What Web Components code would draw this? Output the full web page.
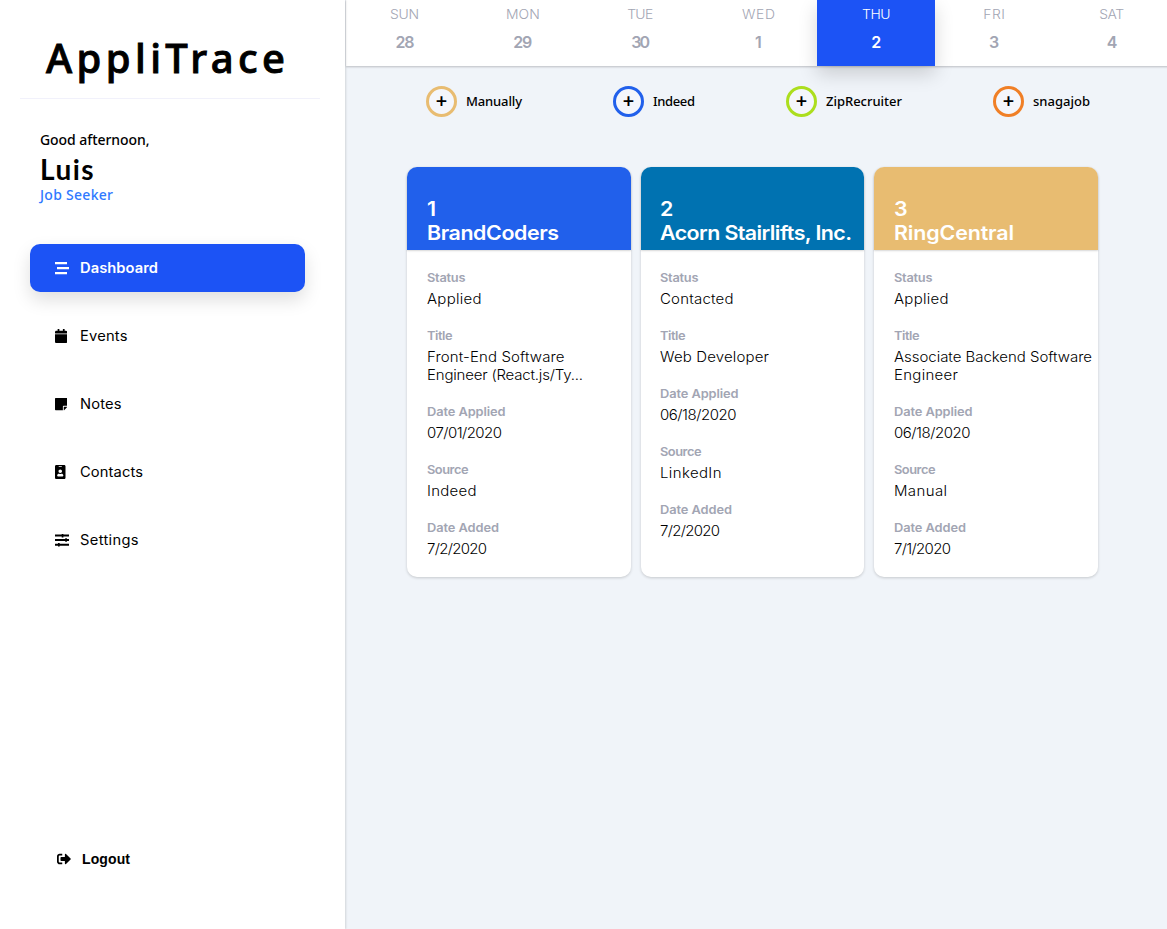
<!DOCTYPE html>
<html lang="en">
<head>
<meta charset="utf-8">
<title>AppliTrace</title>
<style>
html, body { margin: 0; height: 100%; background: #f0f4f9; overflow: hidden; }
body { font-family: Inter, "Liberation Sans", sans-serif; color: #000; --sx: 1.07; }
</style>
</head>
<body>
<tracker-app></tracker-app>
<script>
const define = (name, html, setup) => customElements.define(name, class extends HTMLElement {
  connectedCallback() {
    if (this.shadowRoot) return;
    const root = this.attachShadow({ mode: 'open' });
    root.innerHTML = typeof html === 'function' ? html(this) : html;
    if (setup) setup(this, root);
  }
});

/* One line of text, widened by --sx and tracked to the advance width given in "w". */
define('fit-text', el => `<style>
  :host { display: block; white-space: nowrap; }
  span { display: inline-block; transform: scaleX(var(--sx, 1)); transform-origin: var(--origin, left) center; }
</style><span>${el.getAttribute('t')}</span>`, (el, root) => {
  const s = root.querySelector('span');
  const w = parseFloat(el.getAttribute('w'));
  if (!w) return;
  const sx = parseFloat(getComputedStyle(el).getPropertyValue('--sx')) || 1;
  const n = el.getAttribute('t').length;
  const d = (w - s.getBoundingClientRect().width) / sx / (n > 1 ? n - 1 : 1);
  s.style.letterSpacing = d + 'px';
  s.style.marginRight = -d + 'px';
});

const ICONS = {
  dashboard: ['0 0 14 14', '<path d="M0 1h12v2.200H0zM2 6h12v2.200H2zM0 11h12v2.200H0z"/>'],
  events: ['0 0 448 512', '<path d="M12 192h424c6.600 0 12 5.400 12 12v260c0 26.500-21.500 48-48 48H48c-26.500 0-48-21.500-48-48V204c0-6.600 5.400-12 12-12zm436-44v-36c0-26.500-21.500-48-48-48h-48V12c0-6.600-5.400-12-12-12h-40c-6.600 0-12 5.400-12 12v52H160V12c0-6.600-5.400-12-12-12h-40c-6.600 0-12 5.400-12 12v52H48C21.500 64 0 85.500 0 112v36c0 6.600 5.400 12 12 12h424c6.600 0 12-5.400 12-12z"/>'],
  notes: ['0 0 448 512', '<path d="M312 320h136V56c0-13.300-10.700-24-24-24H24C10.700 32 0 42.700 0 56v400c0 13.300 10.700 24 24 24h264V344c0-13.200 10.800-24 24-24zm129 55l-98 98c-4.500 4.500-10.600 7-17 7h-6V352h128v6.100c0 6.300-2.500 12.400-7 16.900z"/>'],
  contacts: ['0 0 384 512', '<path d="M336 0H48C21.500 0 0 21.500 0 48v416c0 26.500 21.500 48 48 48h288c26.500 0 48-21.500 48-48V48c0-26.500-21.500-48-48-48zM144 32h96c8.800 0 16 7.200 16 16s-7.200 16-16 16h-96c-8.800 0-16-7.200-16-16s7.200-16 16-16zm48 128c35.300 0 64 28.700 64 64s-28.700 64-64 64-64-28.700-64-64 28.700-64 64-64zm112 236.800c0 10.600-10 19.200-22.400 19.200H102.400C90 416 80 407.400 80 396.800v-19.200c0-31.800 30.100-57.600 67.200-57.600h5c12.300 5.100 25.700 8 39.800 8s27.600-2.900 39.800-8h5c37.100 0 67.200 25.800 67.200 57.600v19.200z"/>'],
  settings: ['0 0 14 14', '<path d="M0 1.500h14v2H0zM0 6h14v2H0zM0 10.700h14v2H0zM6.700 1h1.700v3.500H6.700zM10.200 5.300h1.700v3.500h-1.700zM3 10h1.700v3.500H3z"/>'],
  logout: ['0 0 512 512', '<path d="M497 273L329 441c-15 15-41 4.500-41-17v-96H152c-13.300 0-24-10.700-24-24v-96c0-13.300 10.700-24 24-24h136V88c0-21.400 25.900-32 41-17l168 168c9.300 9.400 9.300 24.600 0 34zM192 436v-40c0-6.600-5.400-12-12-12H96c-17.700 0-32-14.300-32-32V160c0-17.700 14.300-32 32-32h84c6.600 0 12-5.400 12-12V76c0-6.600-5.400-12-12-12H96c-53 0-96 43-96 96v192c0 53 43 96 96 96h84c6.600 0 12-5.400 12-12z"/>']
};
define('ui-icon', el => {
  const [box, body] = ICONS[el.getAttribute('name')];
  return `<style>:host { display: block; } svg { display: block; height: 14px; width: auto; fill: currentColor; }</style>
  <svg viewBox="${box}" height="14">${body}</svg>`;
});

define('nav-item', el => `<style>
  :host { display: flex; align-items: center; height: 48px; padding-left: 25px; border-radius: 10px; font-size: 14px; line-height: 20px; font-weight: 430; }
  :host([active]) { background: #1c53f5; color: #fff; font-weight: 600; box-shadow: 0 8px 18px rgba(0,0,0,.13); }
  ui-icon { width: 25px; }
</style>
<ui-icon name="${el.getAttribute('icon')}"></ui-icon><fit-text t="${el.getAttribute('label')}" w="${el.getAttribute('w')}"></fit-text>`);

define('side-bar', `<style>
  :host { --sx: 1; display: flex; flex-direction: column; box-sizing: border-box; width: 345px; height: 929px; background: #fff; box-shadow: 1px 0 2px rgba(0,0,0,.13); position: relative; }
  .logo { margin: 0 25px 0 20px; border-bottom: 1px solid #f1f1fb; padding-left: 26px; box-sizing: border-box; height: 99px; padding-top: 33px;
    font: 500 40px/50px "Noto Sans", sans-serif; -webkit-text-stroke: .9px #000; stroke-linejoin: round; }
  .user { padding: 31px 0 0 40px; font-family: "Noto Sans", sans-serif; font-weight: 500; }
  .hi { font-size: 14px; line-height: 20px; }
  .name { font: 700 28px/38px Lato, sans-serif; }
  .role { font-size: 14px; line-height: 20px; color: #2f79ff; margin-top: -3px; }
  nav { --sx: 1.05; margin: 39px 40px 0 30px; display: grid; gap: 20px; }
  .out { margin-top: auto; padding: 0 0 59px 57px; display: flex; align-items: center; gap: 11px; font: 700 14px/22px "Liberation Sans", sans-serif; }
</style>
<div class="logo"><fit-text t="AppliTrace" w="239"></fit-text></div>
<div class="user">
  <div class="hi"><fit-text t="Good afternoon," w="109.500"></fit-text></div>
  <div class="name"><fit-text t="Luis" w="53.500"></fit-text></div>
  <div class="role"><fit-text t="Job Seeker" w="73"></fit-text></div>
</div>
<nav>
  <nav-item active icon="dashboard" label="Dashboard" w="78"></nav-item>
  <nav-item icon="events" label="Events" w="47.500"></nav-item>
  <nav-item icon="notes" label="Notes" w="41.500"></nav-item>
  <nav-item icon="contacts" label="Contacts" w="63"></nav-item>
  <nav-item icon="settings" label="Settings" w="58.500"></nav-item>
</nav>
<div class="out"><ui-icon name="logout"></ui-icon><fit-text t="Logout" w="48"></fit-text></div>`);

define('day-cell', el => `<style>
  :host { --origin: center; display: flex; flex-direction: column; align-items: center; color: #a2a5b3; padding-top: 4px; box-sizing: border-box; height: 66px; }
  :host([active]) { background: #1c53f5; color: #fff; box-shadow: 0 8px 18px rgba(0,0,0,.16); }
  .d { font-size: 13px; line-height: 21px; font-weight: 350; }
  .n { --sx: 1; font-size: 16px; line-height: 22px; font-weight: 600; margin-top: 6px; }
</style>
<fit-text class="d" t="${el.getAttribute('day')}" w="${el.getAttribute('w')}"></fit-text>
<fit-text class="n" t="${el.getAttribute('num')}" w="${el.getAttribute('nw')}"></fit-text>`);

define('week-bar', `<style>
  :host { display: grid; grid-template-columns: repeat(7, 1fr); width: 825px; height: 66px; background: #fff; box-shadow: 0 1px 2px rgba(0,0,0,.22); }
</style>` + [['SUN', 28, 29, 19], ['MON', 29, 34, 19], ['TUE', 30, 26, 19], ['WED', 1, 33, 0], ['THU', 2, 28.5, 0], ['FRI', 3, 21.5, 0], ['SAT', 4, 25, 0]]
  .map(([d, n, w, nw]) => `<day-cell ${d === 'THU' ? 'active' : ''} day="${d}" num="${n}" w="${w}" nw="${nw}"></day-cell>`).join(''));

define('source-button', el => `<style>
  :host { --sx: 1; display: flex; align-items: center; gap: 9px; font: 500 13px/20px "Noto Sans", sans-serif; }
  .ring { box-sizing: border-box; width: 31px; height: 31px; border-radius: 50%; border: 3px solid ${el.getAttribute('color')}; display: grid; place-items: center; background: #f4f6fb; font: 600 20px/24px "Noto Sans", sans-serif; }
  .ring span { margin-top: -1px; }
  fit-text { margin-bottom: 1px; }
</style>
<div class="ring"><span>+</span></div><fit-text t="${el.getAttribute('label')}" w="${el.getAttribute('w')}"></fit-text>`);

define('job-field', el => `<style>
  :host { display: block; margin-bottom: 19px; }
  .l { font-size: 12px; line-height: 18px; font-weight: 600; color: #a2a5b3; margin-bottom: 3px; }
  .v { font-size: 14px; line-height: 18px; font-weight: 300; }
</style>
<fit-text class="l" t="${el.getAttribute('label')}" w="${el.getAttribute('w')}"></fit-text>
<div class="v"><slot></slot></div>`);

define('job-card', el => `<style>
  :host { display: block; background: #fff; border-radius: 10px; box-shadow: 0 1px 3px rgba(0,0,0,.18); }
  header { box-sizing: border-box; height: 83px; padding: 30px 0 0 19.500px; border-radius: 10px 10px 0 0; background: ${el.getAttribute('color')}; color: #fff; font-size: 20px; line-height: 24px; font-weight: 600; box-shadow: 0 1px 2px rgba(0,0,0,.16); }
  .body { padding: 19px 0 0 19.500px; }
</style>
<header><fit-text t="${el.getAttribute('rank')}"></fit-text><fit-text t="${el.getAttribute('name')}" w="${el.getAttribute('w')}"></fit-text></header>
<div class="body"><slot></slot></div>`);

const JOBS = [
  { c: '#2160eb', n: 'BrandCoders', w: 132, f: [[['Applied', 54.5]], [['Front-End Software', 137.5], ['Engineer (React.js/Ty...', 156]], [['07/01/2020', 75]], [['Indeed', 49.5]], [['7/2/2020', 60]]] },
  { c: '#0072b1', n: 'Acorn Stairlifts, Inc.', w: 192, f: [[['Contacted', 73.5]], [['Web Developer', 109]], [['06/18/2020', 76.5]], [['LinkedIn', 61.5]], [['7/2/2020', 60]]] },
  { c: '#e8bc71', n: 'RingCentral', w: 120, f: [[['Applied', 54.5]], [['Associate Backend Software', 198], ['Engineer', 64]], [['06/18/2020', 76.5]], [['Manual', 53]], [['7/1/2020', 57]]] }
];
const LABELS = [['Status', 38.5], ['Title', 25.5], ['Date Applied', 78.5], ['Source', 41.5], ['Date Added', 72]];

define('tracker-app', `<style>
  :host { display: grid; grid-template-columns: 345px 1fr; height: 929px; background: #f0f4f9; overflow: hidden; }
  side-bar { z-index: 1; }
  main { padding-left: 1px; min-width: 0; }
  .sources { display: flex; gap: 91px; padding: 20px 0 0 80px; }
  .cards { display: grid; grid-template-columns: repeat(3, 1fr); gap: 10px; width: 691px; height: 410px; margin: 50px 0 0 61px; }
</style>
<side-bar></side-bar>
<main>
  <week-bar></week-bar>
  <div class="sources">
    <source-button color="#e8bc71" label="Manually" w="56"></source-button>
    <source-button color="#2160eb" label="Indeed" w="42"></source-button>
    <source-button color="#acde1e" label="ZipRecruiter" w="76"></source-button>
    <source-button color="#f07f26" label="snagajob" w="57"></source-button>
  </div>
  <div class="cards">${JOBS.map((j, i) => `<job-card color="${j.c}" rank="${i + 1}" name="${j.n}" w="${j.w}">${
    j.f.map((lines, k) => `<job-field label="${LABELS[k][0]}" w="${LABELS[k][1]}">${
      lines.map(([t, w]) => `<fit-text t="${t}" w="${w}"></fit-text>`).join('')}</job-field>`).join('')}</job-card>`).join('')}</div>
</main>`);
</script>
</body>
</html>
